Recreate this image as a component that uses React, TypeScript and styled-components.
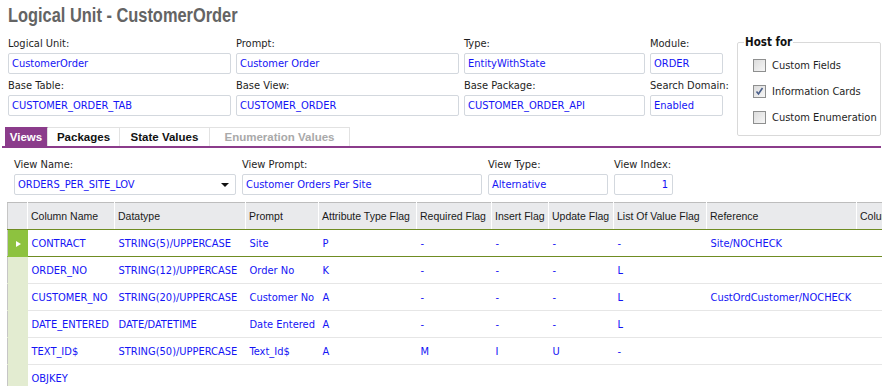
import styled, { createGlobalStyle } from 'styled-components'

const GlobalStyle = createGlobalStyle`
  html, body {
    margin: 0;
    padding: 0;
    background: #ffffff;
    overflow: hidden;
  }
  body {
    font-family: "DejaVu Sans Condensed", "DejaVu Sans", "Liberation Sans", sans-serif;
    font-stretch: condensed;
    font-size: 11px;
    color: #1e1e1e;
  }
`

const Page = styled.div`
  width: 882px;
  height: 386px;
  overflow: hidden;
`

const TitleBar = styled.div`
  height: 33px;
  padding: 3px 8px 0;
  box-sizing: border-box;
`

// narrow bold face is not installed, so squeeze the regular bold one
const Title = styled.h1`
  display: inline-block;
  margin: 0;
  font-family: "Liberation Sans", Arial, sans-serif;
  font-weight: bold;
  font-size: 20px;
  line-height: 24px;
  color: #646464;
  white-space: nowrap;
  transform: scaleX(0.82);
  transform-origin: left center;
`

const TopArea = styled.div`
  display: grid;
  grid-template-columns: 1fr 144px;
  grid-template-rows: auto auto;
  column-gap: 14px;
  margin: 3px 1px 0 2px;
  border-bottom: 2px solid #8b3c8b;
`

const FieldGrid = styled.div<{ $cols: string; $gap: number }>`
  display: grid;
  grid-template-columns: ${p => p.$cols};
  column-gap: ${p => p.$gap}px;
  row-gap: 4px;
  align-self: start;
`

const Field = styled.div`
  display: flex;
  flex-direction: column;
`

const Label = styled.label`
  display: block;
  line-height: 16px;
  height: 16px;
  margin-bottom: 1px;
  white-space: nowrap;
  color: #1e1e1e;
`

const Input = styled.div<{ $align?: string }>`
  position: relative;
  height: 21px;
  box-sizing: border-box;
  border: 1px solid #d3d8de;
  border-radius: 2px;
  padding: 0 4px 0 3px;
  line-height: 19px;
  color: #1414f5;
  text-align: ${p => p.$align || 'left'};
  white-space: nowrap;
  overflow: hidden;
  background: #ffffff;
`

const DropArrow = styled.span`
  position: absolute;
  right: 6px;
  top: 8px;
  width: 0;
  height: 0;
  border-left: 4px solid transparent;
  border-right: 4px solid transparent;
  border-top: 4px solid #111111;
`

const MainFields = styled.div`
  grid-column: 1;
  grid-row: 1;
  padding-left: 6px;
`

const HostBox = styled.fieldset`
  grid-column: 2;
  grid-row: 1 / span 2;
  align-self: start;
  margin: 0;
  padding: 4px 0 5px 6px;
  border: 1px solid #d9d9d9;
  border-radius: 2px;
  min-width: 0;
`

const Legend = styled.legend`
  padding: 0 1px;
  font-weight: bold;
  font-size: 11.5px;
  line-height: 12px;
  color: #111111;
`

const CheckRow = styled.div`
  display: flex;
  align-items: center;
  gap: 6px;
  height: 26px;
  margin-left: 9px;
  white-space: nowrap;
`

const Box = styled.span`
  display: inline-flex;
  align-items: center;
  justify-content: center;
  width: 13px;
  height: 13px;
  box-sizing: border-box;
  border: 1px solid #8e8f8f;
  background: linear-gradient(135deg, #dcdcdc, #f6f6f6);
`

const Tabs = styled.div`
  grid-column: 1;
  grid-row: 2;
  display: flex;
  margin: 11px 0 0 3px;
`

const Tab = styled.div<{ $w: number; $active?: boolean; $disabled?: boolean }>`
  width: ${p => p.$w}px;
  height: 19px;
  box-sizing: border-box;
  display: flex;
  align-items: center;
  justify-content: center;
  font-family: "Liberation Sans", Arial, sans-serif;
  font-weight: bold;
  font-size: 11.5px;
  background: ${p => (p.$active ? '#8b3c8b' : '#ffffff')};
  color: ${p => (p.$active ? '#ffffff' : p.$disabled ? '#a9a9a9' : '#111111')};
  border-top: 1px solid ${p => (p.$active ? '#8b3c8b' : '#e2e2e2')};
  border-right: 1px solid #e2e2e2;
`

const ViewArea = styled.div`
  padding: 9px 0 0 14px;
`

const Table = styled.table`
  margin: 7px 0 0 7px;
  border-collapse: collapse;
  table-layout: fixed;
  width: 960px;
  border-left: 1px solid #c6c6c6;
  border-top: 1px solid #bdbdbd;
`

const Th = styled.th`
  height: 26px;
  padding: 0 0 0 3px;
  background: #e9eaec;
  border-right: 1px solid #ffffff;
  border-bottom: 1px solid #6f8c22;
  text-align: left;
  font-family: "Liberation Sans", Arial, sans-serif;
  font-weight: normal;
  font-size: 10.5px;
  color: #1a1a1a;
  white-space: nowrap;
  overflow: hidden;
`

const Td = styled.td<{ $line: string }>`
  height: 26px;
  padding: 0 0 0 4px;
  border-bottom: 1px solid ${p => p.$line};
  color: #1414f5;
  white-space: nowrap;
  overflow: hidden;
`

const Indicator = styled.td<{ $current?: boolean }>`
  padding: 0;
  background: ${p => (p.$current ? '#8dc23f' : '#e3ecd1')};
  border-bottom: 1px solid ${p => (p.$current ? '#8dc23f' : '#e3ecd1')};
  text-align: center;
`

const Arrow = styled.span`
  display: inline-block;
  width: 0;
  height: 0;
  margin-left: 1px;
  border-top: 3px solid transparent;
  border-bottom: 3px solid transparent;
  border-left: 5px solid #ffffff;
`

const cols = [20, 87, 131, 73, 98, 75, 57, 65, 93, 150, 111]
const headers = [
  'Column Name',
  'Datatype',
  'Prompt',
  'Attribute Type Flag',
  'Required Flag',
  'Insert Flag',
  'Update Flag',
  'List Of Value Flag',
  'Reference',
  'Column Implementation',
]

const rows = [
  ['CONTRACT', 'STRING(5)/UPPERCASE', 'Site', 'P', '-', '-', '-', '-', 'Site/NOCHECK', ''],
  ['ORDER_NO', 'STRING(12)/UPPERCASE', 'Order No', 'K', '-', '-', '-', 'L', '', ''],
  ['CUSTOMER_NO', 'STRING(20)/UPPERCASE', 'Customer No', 'A', '-', '-', '-', 'L', 'CustOrdCustomer/NOCHECK', ''],
  ['DATE_ENTERED', 'DATE/DATETIME', 'Date Entered', 'A', '-', '-', '-', 'L', '', ''],
  ['TEXT_ID$', 'STRING(50)/UPPERCASE', 'Text_Id$', 'A', 'M', 'I', 'U', '-', '', ''],
  ['OBJKEY', '', '', '', '', '', '', '', '', ''],
]

function Check({ checked, label }: { checked?: boolean; label: string }) {
  return (
    <CheckRow>
      <Box>
        {checked && (
          <svg width="9" height="9" viewBox="0 0 9 9">
            <path d="M1.5 4.5 L3.5 7 L7.5 1" fill="none" stroke="#4a5f8a" strokeWidth="1.6" />
          </svg>
        )}
      </Box>
      <span>{label}</span>
    </CheckRow>
  )
}

export default function App() {
  return (
    <Page>
      <GlobalStyle />
      <TitleBar>
        <Title>Logical Unit - CustomerOrder</Title>
      </TitleBar>
      <TopArea>
        <MainFields>
          <FieldGrid $cols="223px 223px 181px 73px" $gap={5}>
            <Field>
              <Label>Logical Unit:</Label>
              <Input>CustomerOrder</Input>
            </Field>
            <Field>
              <Label>Prompt:</Label>
              <Input>Customer Order</Input>
            </Field>
            <Field>
              <Label>Type:</Label>
              <Input>EntityWithState</Input>
            </Field>
            <Field>
              <Label>Module:</Label>
              <Input>ORDER</Input>
            </Field>
            <Field>
              <Label>Base Table:</Label>
              <Input>CUSTOMER_ORDER_TAB</Input>
            </Field>
            <Field>
              <Label>Base View:</Label>
              <Input>CUSTOMER_ORDER</Input>
            </Field>
            <Field>
              <Label>Base Package:</Label>
              <Input>CUSTOMER_ORDER_API</Input>
            </Field>
            <Field>
              <Label>Search Domain:</Label>
              <Input>Enabled</Input>
            </Field>
          </FieldGrid>
        </MainFields>
        <HostBox>
          <Legend>Host for</Legend>
          <Check label="Custom Fields" />
          <Check checked label="Information Cards" />
          <Check label="Custom Enumeration" />
        </HostBox>
        <Tabs>
          <Tab $w={43} $active>Views</Tab>
          <Tab $w={72}>Packages</Tab>
          <Tab $w={90}>State Values</Tab>
          <Tab $w={140} $disabled>Enumeration Values</Tab>
        </Tabs>
      </TopArea>
      <ViewArea>
        <FieldGrid $cols="222px 240px 120px 59px" $gap={6}>
          <Field>
            <Label>View Name:</Label>
            <Input>
              ORDERS_PER_SITE_LOV
              <DropArrow />
            </Input>
          </Field>
          <Field>
            <Label>View Prompt:</Label>
            <Input>Customer Orders Per Site</Input>
          </Field>
          <Field>
            <Label>View Type:</Label>
            <Input>Alternative</Input>
          </Field>
          <Field>
            <Label>View Index:</Label>
            <Input $align="right">1</Input>
          </Field>
        </FieldGrid>
      </ViewArea>
      <Table>
        <colgroup>
          {cols.map((w, i) => (
            <col key={i} style={{ width: w }} />
          ))}
        </colgroup>
        <thead>
          <tr>
            <Th />
            {headers.map(h => (
              <Th key={h}>{h}</Th>
            ))}
          </tr>
        </thead>
        <tbody>
          {rows.map((r, i) => (
            <tr key={r[0]}>
              <Indicator $current={i === 0}>{i === 0 && <Arrow />}</Indicator>
              {r.map((c, j) => (
                <Td key={j} $line={i === 0 ? '#6f8c22' : '#e6e6e6'}>
                  {c}
                </Td>
              ))}
            </tr>
          ))}
        </tbody>
      </Table>
    </Page>
  )
}
